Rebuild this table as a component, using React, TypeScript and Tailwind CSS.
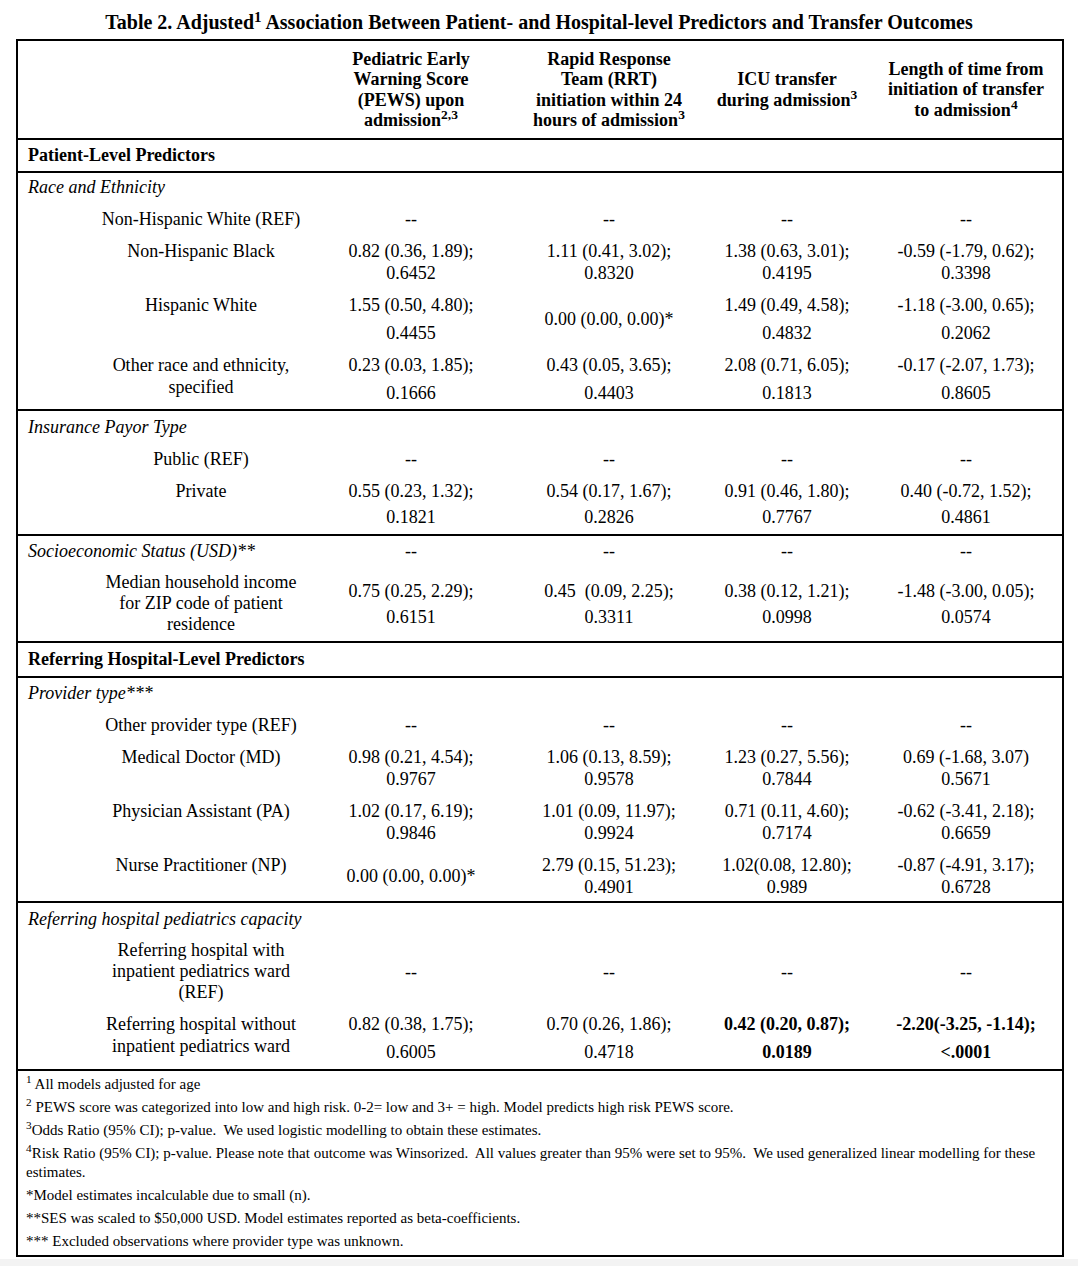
import React from "react";

type CellSpec = { lines: string[]; gap?: string; mid?: boolean; bold?: boolean };
type RowSpec = { label: string[]; lead?: string; cells: CellSpec[] };

const W = ["w-[182px]", "w-[214px]", "w-[142px]", "w-[204px] pl-[12px]"];

const dash: CellSpec = { lines: ["--"] };
const dashMid: CellSpec = { lines: ["--"], mid: true };
const dashes = [dash, dash, dash, dash];

function ValueCell({ spec, i }: { spec: CellSpec; i: number }) {
  return (
    <div
      className={[
        W[i],
        "shrink-0 flex flex-col items-center text-center whitespace-pre leading-[22px]",
        spec.gap ?? "",
        spec.mid ? "self-center" : "",
        spec.bold ? "font-bold" : "",
      ].join(" ")}
    >
      {spec.lines.map((l, k) => (
        <div key={k}>{l}</div>
      ))}
    </div>
  );
}

function Row({ row }: { row: RowSpec }) {
  return (
    <div className="flex items-start">
      <div className={["w-[302px] shrink-0 pl-[64px] flex flex-col items-center text-center whitespace-nowrap", row.lead ?? "leading-[22px]"].join(" ")}>
        {row.label.map((l, k) => (
          <div key={k}>{l}</div>
        ))}
      </div>
      {row.cells.map((c, i) => (
        <ValueCell key={i} spec={c} i={i} />
      ))}
    </div>
  );
}

function GroupHead({ text, cells }: { text: string; cells?: CellSpec[] }) {
  return (
    <div className="flex items-start leading-[22px]">
      <div className="w-[302px] shrink-0 pl-[10px] italic whitespace-nowrap">{text}</div>
      {cells?.map((c, i) => (
        <ValueCell key={i} spec={c} i={i} />
      ))}
    </div>
  );
}

const race: RowSpec[] = [
  { label: ["Non-Hispanic White (REF)"], cells: dashes },
  {
    label: ["Non-Hispanic Black"],
    cells: [
      { lines: ["0.82 (0.36, 1.89);", "0.6452"] },
      { lines: ["1.11 (0.41, 3.02);", "0.8320"] },
      { lines: ["1.38 (0.63, 3.01);", "0.4195"] },
      { lines: ["-0.59 (-1.79, 0.62);", "0.3398"] },
    ],
  },
  {
    label: ["Hispanic White"],
    cells: [
      { lines: ["1.55 (0.50, 4.80);", "0.4455"], gap: "gap-[6px]" },
      { lines: ["0.00 (0.00, 0.00)*"], mid: true },
      { lines: ["1.49 (0.49, 4.58);", "0.4832"], gap: "gap-[6px]" },
      { lines: ["-1.18 (-3.00, 0.65);", "0.2062"], gap: "gap-[6px]" },
    ],
  },
  {
    label: ["Other race and ethnicity,", "specified"],
    cells: [
      { lines: ["0.23 (0.03, 1.85);", "0.1666"], gap: "gap-[6px]" },
      { lines: ["0.43 (0.05, 3.65);", "0.4403"], gap: "gap-[6px]" },
      { lines: ["2.08 (0.71, 6.05);", "0.1813"], gap: "gap-[6px]" },
      { lines: ["-0.17 (-2.07, 1.73);", "0.8605"], gap: "gap-[6px]" },
    ],
  },
];

const insurance: RowSpec[] = [
  { label: ["Public (REF)"], cells: dashes },
  {
    label: ["Private"],
    cells: [
      { lines: ["0.55 (0.23, 1.32);", "0.1821"], gap: "gap-[4px]" },
      { lines: ["0.54 (0.17, 1.67);", "0.2826"], gap: "gap-[4px]" },
      { lines: ["0.91 (0.46, 1.80);", "0.7767"], gap: "gap-[4px]" },
      { lines: ["0.40 (-0.72, 1.52);", "0.4861"], gap: "gap-[4px]" },
    ],
  },
];

const ses: RowSpec[] = [
  {
    label: ["Median household income", "for ZIP code of patient", "residence"],
    lead: "leading-[21px]",
    cells: [
      { lines: ["0.75 (0.25, 2.29);", "0.6151"], gap: "gap-[4px]", mid: true },
      { lines: ["0.45  (0.09, 2.25);", "0.3311"], gap: "gap-[4px]", mid: true },
      { lines: ["0.38 (0.12, 1.21);", "0.0998"], gap: "gap-[4px]", mid: true },
      { lines: ["-1.48 (-3.00, 0.05);", "0.0574"], gap: "gap-[4px]", mid: true },
    ],
  },
];

const provider: RowSpec[] = [
  { label: ["Other provider type (REF)"], cells: dashes },
  {
    label: ["Medical Doctor (MD)"],
    cells: [
      { lines: ["0.98 (0.21, 4.54);", "0.9767"] },
      { lines: ["1.06 (0.13, 8.59);", "0.9578"] },
      { lines: ["1.23 (0.27, 5.56);", "0.7844"] },
      { lines: ["0.69 (-1.68, 3.07)", "0.5671"] },
    ],
  },
  {
    label: ["Physician Assistant (PA)"],
    cells: [
      { lines: ["1.02 (0.17, 6.19);", "0.9846"] },
      { lines: ["1.01 (0.09, 11.97);", "0.9924"] },
      { lines: ["0.71 (0.11, 4.60);", "0.7174"] },
      { lines: ["-0.62 (-3.41, 2.18);", "0.6659"] },
    ],
  },
  {
    label: ["Nurse Practitioner (NP)"],
    cells: [
      { lines: ["0.00 (0.00, 0.00)*"], mid: true },
      { lines: ["2.79 (0.15, 51.23);", "0.4901"] },
      { lines: ["1.02(0.08, 12.80);", "0.989"] },
      { lines: ["-0.87 (-4.91, 3.17);", "0.6728"] },
    ],
  },
];

const capacity: RowSpec[] = [
  {
    label: ["Referring hospital with", "inpatient pediatrics ward", "(REF)"],
    lead: "leading-[21px]",
    cells: [dashMid, dashMid, dashMid, dashMid],
  },
  {
    label: ["Referring hospital without", "inpatient pediatrics ward"],
    cells: [
      { lines: ["0.82 (0.38, 1.75);", "0.6005"], gap: "gap-[6px]" },
      { lines: ["0.70 (0.26, 1.86);", "0.4718"], gap: "gap-[6px]" },
      { lines: ["0.42 (0.20, 0.87);", "0.0189"], gap: "gap-[6px]", bold: true },
      { lines: ["-2.20(-3.25, -1.14);", "<.0001"], gap: "gap-[6px]", bold: true },
    ],
  },
];

function Head({ children, i }: { children: React.ReactNode; i: number }) {
  return (
    <div className={[W[i], "shrink-0 flex flex-col items-center text-center font-bold leading-[20.5px] whitespace-nowrap"].join(" ")}>
      {children}
    </div>
  );
}

export default function App() {
  return (
    <div className="w-[1078px] h-[1266px] bg-white text-black font-['Liberation_Serif','Times_New_Roman',serif] text-[18px] flex flex-col">
      <div className="pt-[10px] text-center font-bold text-[20px] leading-[24px]">
        Table 2. Adjusted<sup>1</sup> Association Between Patient- and Hospital-level Predictors and Transfer Outcomes
      </div>
      <div className="mt-[5px] ml-[16px] w-[1048px] border-2 border-black">
        {/* header */}
        <div className="h-[99px] flex items-center border-b-2 border-black">
          <div className="w-[302px] shrink-0" />
          <Head i={0}>
            <div>Pediatric Early</div>
            <div>Warning Score</div>
            <div>(PEWS) upon</div>
            <div>
              admission<sup>2,3</sup>
            </div>
          </Head>
          <Head i={1}>
            <div>Rapid Response</div>
            <div>Team (RRT)</div>
            <div>initiation within 24</div>
            <div>
              hours of admission<sup>3</sup>
            </div>
          </Head>
          <Head i={2}>
            <div>ICU transfer</div>
            <div>
              during admission<sup>3</sup>
            </div>
          </Head>
          <Head i={3}>
            <div>Length of time from</div>
            <div>initiation of transfer</div>
            <div>
              to admission<sup>4</sup>
            </div>
          </Head>
        </div>

        <div className="h-[33px] flex items-center pl-[10px] font-bold border-b-2 border-black">Patient-Level Predictors</div>

        <div className="h-[238px] pt-[3px] flex flex-col gap-[10px] border-b-2 border-black">
          <GroupHead text="Race and Ethnicity" />
          {race.map((r, k) => (
            <Row key={k} row={r} />
          ))}
        </div>

        <div className="h-[125px] pt-[5px] flex flex-col gap-[10px] border-b-2 border-black">
          <GroupHead text="Insurance Payor Type" />
          {insurance.map((r, k) => (
            <Row key={k} row={r} />
          ))}
        </div>

        <div className="h-[107px] pt-[4px] flex flex-col gap-[10px] border-b-2 border-black">
          <GroupHead text="Socioeconomic Status (USD)**" cells={dashes} />
          {ses.map((r, k) => (
            <Row key={k} row={r} />
          ))}
        </div>

        <div className="h-[35px] flex items-center pl-[10px] font-bold border-b-2 border-black">Referring Hospital-Level Predictors</div>

        <div className="h-[225px] pt-[4px] flex flex-col gap-[10px] border-b-2 border-black">
          <GroupHead text="Provider type***" />
          {provider.map((r, k) => (
            <Row key={k} row={r} />
          ))}
        </div>

        <div className="h-[168px] pt-[5px] flex flex-col gap-[10px] border-b-2 border-black">
          <GroupHead text="Referring hospital pediatrics capacity" />
          {capacity.map((r, k) => (
            <Row key={k} row={r} />
          ))}
        </div>

        <div className="h-[184px] pt-[4px] pl-[8px] pr-[10px] flex flex-col gap-[4px] text-[15px] leading-[19px]">
          <div>
            <sup>1</sup> All models adjusted for age
          </div>
          <div>
            <sup>2</sup> PEWS score was categorized into low and high risk. 0-2= low and 3+ = high. Model predicts high risk PEWS score.
          </div>
          <div>
            <sup>3</sup>Odds Ratio (95% CI); p-value.&nbsp; We used logistic modelling to obtain these estimates.
          </div>
          <div className="whitespace-nowrap">
            <sup>4</sup>Risk Ratio (95% CI); p-value. Please note that outcome was Winsorized.&nbsp; All values greater than 95% were set to 95%.&nbsp; We used generalized linear modelling for these
            <br />
            estimates.
          </div>
          <div>*Model estimates incalculable due to small (n).</div>
          <div>**SES was scaled to $50,000 USD. Model estimates reported as beta-coefficients.</div>
          <div>*** Excluded observations where provider type was unknown.</div>
        </div>
      </div>
      <div className="mt-[2px] flex-1 bg-[#f3f3f3]" />
    </div>
  );
}
